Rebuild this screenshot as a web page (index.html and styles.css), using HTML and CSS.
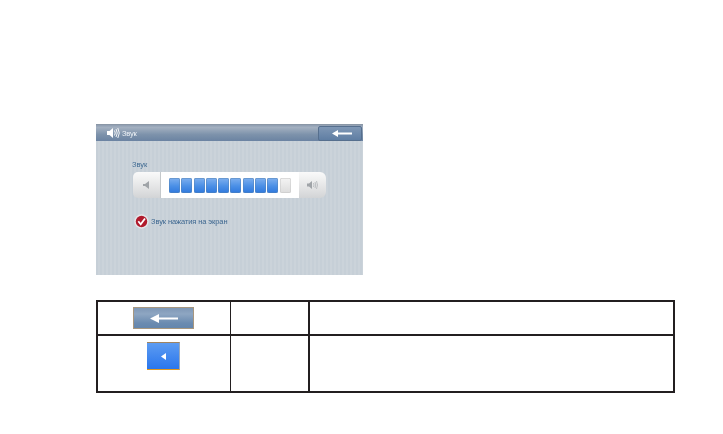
FILE: index.html
```html
<!DOCTYPE html>
<html lang="ru">
<head>
<meta charset="utf-8">
<title>Звук</title>
<link rel="stylesheet" href="styles.css">
</head>
<body>
<section class="screen">
  <header class="bar">
    <div class="bar-title">
      <svg class="bar-icon" width="13" height="12" viewBox="0 0 13 12"><path d="M0 4h2.500L6 1v10L2.500 8H0z" fill="#fff"/><path d="M7.500 3.500q1.500 2.500 0 5M9 2q2.500 4 0 8M10.800 1q3 5 0 10" fill="none" stroke="#fff" stroke-width=".9"/></svg>
      <span>Звук</span>
    </div>
    <button class="back">
      <svg width="20" height="7" viewBox="0 0 20 7"><path d="M0 3.500 6 0v2.500h14v2H6V7z" fill="#fff"/></svg>
    </button>
  </header>
  <div class="body">
    <div class="label">Звук</div>
    <div class="slider">
      <div class="cap cap-left">
        <svg width="7" height="8" viewBox="0 0 7 8"><path d="M0 3h2l4-3v8L2 5H0z" fill="#a0a4a8"/></svg>
      </div>
      <div class="track">
        <i class="seg"></i><i class="seg"></i><i class="seg"></i><i class="seg"></i><i class="seg"></i><i class="seg"></i><i class="seg"></i><i class="seg"></i><i class="seg"></i><i class="seg seg-empty"></i>
      </div>
      <div class="cap cap-right">
        <svg width="11" height="10" viewBox="0 0 11 10"><path d="M0 3.500h2L5 1v8L2 6.500H0z" fill="#a0a4a8"/><path d="M6.500 3q1 2 0 4M8 2q1.500 3 0 6M9.500 1q2 4 0 8" fill="none" stroke="#b0b4b8" stroke-width=".8"/></svg>
      </div>
    </div>
    <div class="check-row">
      <svg class="check" width="15" height="15" viewBox="0 0 15 15"><circle cx="7.500" cy="7.500" r="7.200" fill="#e4e6e9"/><circle cx="7.500" cy="7.500" r="5.700" fill="#b01a2c"/><path d="M4.300 7.300 6.700 10.200 11 4.500" fill="none" stroke="#fff" stroke-width="1.800"/></svg>
      <span>Звук нажатия на экран</span>
    </div>
  </div>
</section>
<table class="legend">
  <tr class="row-a">
    <td class="col-a"><span class="btn-sample"><svg width="28" height="9" viewBox="0 0 28 9"><path d="M0 4.500 9 0v3.500h19v2H9V9z" fill="#fff"/></svg></span></td>
    <td class="col-b"></td>
    <td></td>
  </tr>
  <tr class="row-b">
    <td class="col-a"><span class="blue-sample"><svg width="5" height="7" viewBox="0 0 5 7"><path d="M0 3.500 5 0v7z" fill="#fff"/></svg></span></td>
    <td class="col-b"></td>
    <td></td>
  </tr>
</table>
</body>
</html>
```
FILE: styles.css
```css
html, body { margin: 0; padding: 0; background: #fff; }
body { width: 723px; height: 434px; overflow: hidden; padding: 124px 0 0 96px; box-sizing: border-box; font-family: "Liberation Sans", Arial, sans-serif; }

.screen {
  width: 267px; height: 151px;
  background: repeating-linear-gradient(90deg, #c6cfd7 0 2px, #cbd3da 2px 4px);
  display: flex; flex-direction: column;
  filter: blur(.35px);
}
.bar {
  height: 17px; box-sizing: border-box;
  background: linear-gradient(#8e9db1 0, #a3b0c0 15%, #7d92ab 60%, #6b83a2 100%);
  border-top: 1px solid #8a97a6;
  display: flex; justify-content: space-between; align-items: center;
}
.bar-title { display: flex; align-items: center; gap: 2px; padding-left: 11px; color: #eef2f6; font-size: 7.500px; letter-spacing: -.2px; }
.bar-icon { display: block; }
.back {
  width: 44px; height: 15px; margin: 0 1px 0 0; padding: 0 0 0 4px;
  border: 1px solid #566f8e; border-radius: 2px;
  background: linear-gradient(#7f97b5, #5f7ea3);
  display: flex; align-items: center; justify-content: center;
}
.body { padding: 19px 0 0 36px; flex: 1; }
.label { font-size: 7.500px; line-height: 9px; color: #3f6a92; }
.slider { display: flex; width: 193px; height: 26px; margin: 3px 0 0 1px; }
.cap {
  background: linear-gradient(#fafafa, #dfe0e1 70%, #d2d4d6);
  display: flex; align-items: center; justify-content: center;
}
.cap-left { width: 28px; border-radius: 5px 0 0 5px; border-right: 1px solid #c4c8cb; box-sizing: border-box; }
.cap-right { width: 27px; border-radius: 0 6px 6px 0; }
.track { width: 138px; background: #fff; display: flex; align-items: center; gap: 1.300px; padding-left: 8px; box-sizing: border-box; }
.seg { width: 11px; height: 15px; border-radius: 2px; background: linear-gradient(#7fb0ee, #4a8fe6 55%, #2f78dc); box-shadow: inset 0 0 0 .5px #5584b8; }
.seg-empty { background: linear-gradient(#f4f4f4, #dcdcdc); box-shadow: inset 0 0 0 .5px #c4c4c4; }
.check-row { display: flex; align-items: center; gap: 2px; margin: 16px 0 0 2px; font-size: 7.500px; color: #3d6790; letter-spacing: -.1px; }
.check { display: block; flex: none; }

.legend {
  margin: 25px 0 0 0;
  width: 579px; height: 93px; box-sizing: border-box;
  border-collapse: collapse;
  border: 2px solid #231f20;
  table-layout: fixed;
}
.legend td { padding: 0; border-left: 2px solid #231f20; vertical-align: top; text-align: center; }
.legend .col-a { width: 132px; border-left: 0; }
.legend .col-b { width: 77px; border-left: 1px solid #231f20; }
.row-a { height: 34px; border-bottom: 2px solid #231f20; }
.btn-sample {
  display: flex; align-items: center; justify-content: center;
  width: 61px; height: 22px; margin: 5px 0 0 35px; box-sizing: border-box;
  border: 1px solid #a8977f;
  background: linear-gradient(#7f98b6, #8ea6c2 30%, #6b8bb0 75%, #6486ad);
}
.blue-sample {
  display: flex; align-items: center; justify-content: center;
  width: 33px; height: 28px; margin: 6px 0 0 49px; box-sizing: border-box;
  border-top: 1px solid #a08460; border-bottom: 1px solid #e39a1c; border-right: 1px solid #9aa9bd;
  background: linear-gradient(#5d9cf2, #2a76ec);
}
```
